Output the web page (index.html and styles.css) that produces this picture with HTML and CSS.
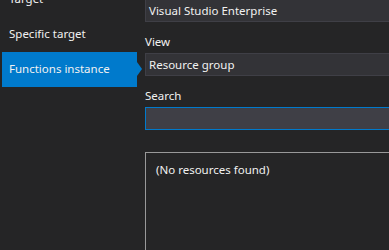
FILE: index.html
```html
<!DOCTYPE html>
<html lang="en">
<head>
  <meta charset="UTF-8" />
  <title>Publish - Functions instance</title>
  <link rel="stylesheet" href="styles.css">
</head>
<body>
  <div class="dialog">
    <ul class="steps">
      <li>Target</li>
      <li>Specific target</li>
      <li class="active">Functions instance</li>
    </ul>

    <div class="form">
      <div class="field">Visual Studio Enterprise</div>
      <label class="label">View</label>
      <div class="field">Resource group</div>
      <label class="label">Search</label>
      <div class="field search"></div>
      <div class="results">(No resources found)</div>
    </div>
  </div>
</body>
</html>
```

FILE: styles.css
```css
body {
  margin: 0;
  background: #252526;
  color: #f1f1f1;
  font-family: "Noto Sans", "Open Sans", sans-serif;
  font-size: 11.5px;
  overflow: hidden;
}
.dialog {
  display: flex;
  width: 389px;
  height: 250px;
  overflow: hidden;
}
.steps {
  list-style: none;
  margin: -18px 0 0 0;
  padding: 0 0 0 2px;
  width: 135px;
  flex-shrink: 0;
}
.steps li {
  height: 35px;
  line-height: 34px;
  padding-left: 7px;
  position: relative;
}
.steps li.active {
  background: #007acc;
}
.steps li.active::after {
  content: "";
  position: absolute;
  right: -5px;
  top: 10px;
  border-top: 7px solid transparent;
  border-bottom: 7px solid transparent;
  border-left: 5px solid #007acc;
}
.form {
  margin: -1px 0 0 8px;
  flex: 1;
  min-width: 300px;
}
.field {
  height: 21px;
  line-height: 21px;
  padding-left: 3px;
  background: #333337;
  border: 1px solid #3f3f46;
}
.field.search {
  background: #3f3f46;
  border-color: #007acc;
}
.label {
  display: block;
  padding: 12px 0 3px 0;
  line-height: 16px;
}
.results {
  margin-top: 22px;
  height: 120px;
  border: 1px solid #999999;
  padding: 9px 10px;
  line-height: 16px;
}
```
